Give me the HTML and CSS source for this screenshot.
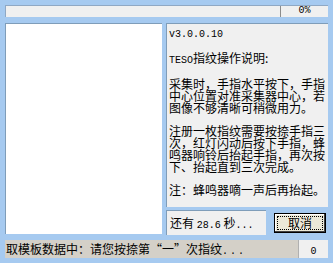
FILE: index.html
```html
<!DOCTYPE html>
<html lang="zh-CN">
<head>
  <meta charset="UTF-8">
  <title>指纹采集</title>
  <link rel="stylesheet" href="styles.css">
</head>
<body>
  <div class="window">
    <div class="progress">
      <div class="track"></div>
      <div class="pct">0%</div>
    </div>

    <div class="main">
      <div class="preview"></div>

      <div class="side">
        <div class="help">
          <p><span class="en">v3.0.0.10</span></p>
          <p><span class="en">TESO</span>指纹操作说明:</p>
          <p>采集时，手指水平按下，手指<br>中心位置对准采集器中心，若<br>图像不够清晰可稍微用力。</p>
          <p>注册一枚指纹需要按捺手指三<br>次，红灯闪动后按下手指，蜂<br>鸣器响铃后抬起手指，再次按<br>下、抬起直到三次完成。</p>
          <p>注：蜂鸣器嘀一声后再抬起。</p>
        </div>
        <div class="actions">
          <div class="countdown">还有 <span class="en">28.6</span> 秒<span class="en">...</span></div>
          <button class="btn"><span class="focus">取消</span></button>
        </div>
      </div>
    </div>

    <div class="status">
      <div class="msg">取模板数据中：请您按捺第“一”次指纹<span class="en dots">...</span></div>
      <div class="count"><span class="en">0</span></div>
    </div>
  </div>
</body>
</html>
```

FILE: styles.css
```css
/* fingerprint capture dialog */
body {
  margin: 0;
  background: #a6caf0;
  font-family: "Noto Sans CJK SC", sans-serif;
  font-size: 12px;
  color: #000;
}

.window {
  width: 333px;
  height: 263px;
  box-sizing: border-box;
  padding: 5px;
  display: flex;
  flex-direction: column;
}

.en {
  font-family: "Liberation Mono", monospace;
  font-size: 10px;
}

/* top progress bar */
.progress {
  height: 12px;
  display: flex;
  background: #f0f0f0;
  border-top: 1px solid #8fa8c4;
  border-left: 1px solid #8fa8c4;
  box-sizing: border-box;
}

.track {
  flex: 1;
}

.pct {
  width: 47px;
  border-left: 1px solid #8c8c8c;
  text-align: center;
  font-family: "Liberation Mono", monospace;
  font-size: 10px;
  line-height: 10px;
}

/* middle area */
.main {
  margin-top: 6px;
  height: 211px;
  display: flex;
  gap: 4px;
}

.preview {
  width: 156px;
  background: #fff;
  border-top: 1px solid #7f9db9;
  border-left: 1px solid #7f9db9;
}

.side {
  flex: 1;
  display: flex;
  flex-direction: column;
  gap: 3px;
}

.help {
  flex: 1;
  background: #f0f0f0;
  border-top: 1px solid #7f9db9;
  border-left: 1px solid #7f9db9;
  padding: 2px 0 0 2px;
  line-height: 12px;
  white-space: nowrap;
}

.help p {
  margin: 0 0 11px;
}

.actions {
  height: 25px;
  display: flex;
  align-items: center;
  justify-content: space-between;
}

.countdown {
  width: 100px;
  height: 25px;
  box-sizing: border-box;
  background: #f0f0f0;
  border-top: 1px solid #7f9db9;
  border-left: 1px solid #7f9db9;
  padding-left: 3px;
  line-height: 24px;
}

.btn {
  width: 52px;
  height: 20px;
  margin-right: 2px;
  padding: 2px;
  background: #ece9d8;
  border: 1px solid #000;
  box-shadow: inset -1px -1px 0 #404040, inset 1px 1px 0 #fff;
  font: inherit;
  line-height: 12px;
}

.focus {
  display: block;
  height: 12px;
  border: 1px dotted #000;
}

/* status bar */
.status {
  margin-top: 6px;
  height: 18px;
  display: flex;
  background: #d4d0c8;
}

.msg {
  flex: 1;
  padding-left: 1px;
  line-height: 18px;
  white-space: nowrap;
  overflow: hidden;
}

.dots {
  letter-spacing: 2px;
}

.count {
  width: 29px;
  background: #f0f0f0;
  border-left: 1px solid #b0b0b0;
  text-align: center;
  line-height: 18px;
}
```
